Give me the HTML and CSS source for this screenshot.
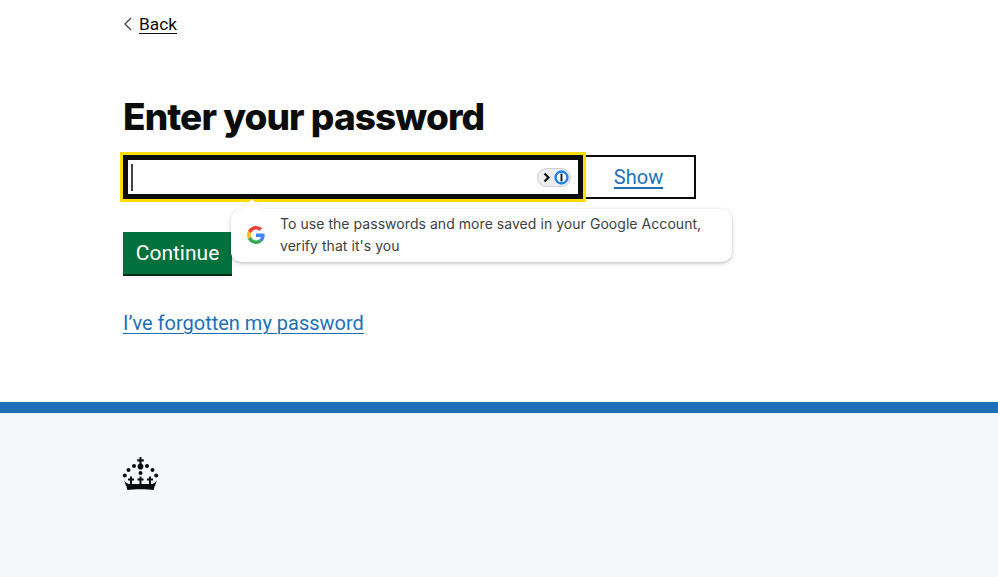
FILE: index.html
```html
<!DOCTYPE html>
<html lang="en">
<head>
<meta charset="utf-8">
<title>Enter your password</title>
<link rel="stylesheet" href="styles.css">
</head>
<body>
<main class="page">
  <a class="back" href="#"><svg class="back-chevron" width="9" height="14" viewBox="0 0 9 14"><path d="M8 1 L2 7 L8 13" fill="none" stroke="#3a3a3a" stroke-width="1.2"/></svg><span class="back-text">Back</span></a>
  <h1 class="title">Enter your password</h1>
  <div class="field">
    <div class="input">
      <span class="caret"></span>
      <span class="pill">
        <svg width="34" height="19" viewBox="0 0 34 19"><rect x=".5" y=".5" width="33" height="18" rx="9" fill="#eceef0" stroke="#cfd1d4"/><path d="M7.5 5.500 L11.500 9.500 L7.500 13.500" fill="none" stroke="#111" stroke-width="2.200"/><circle cx="24.500" cy="9.500" r="7.500" fill="#fff"/><circle cx="24.500" cy="9.500" r="6" fill="#fff" stroke="#1a7ff0" stroke-width="2.400"/><rect x="23.500" y="5.500" width="2" height="8" fill="#15233a"/></svg>
      </span>
    </div>
    <button class="show" type="button">Show</button>
  </div>
  <div class="bubble">
    <span class="bubble-arrow"></span>
    <svg class="g-logo" width="18" height="18" viewBox="0 0 48 48"><path fill="#EA4335" d="M24 9.500c3.500 0 6.700 1.200 9.200 3.600l6.900-6.900C35.900 2.400 30.500 0 24 0 14.600 0 6.500 5.400 2.600 13.200l8 6.200C12.500 13.700 17.800 9.500 24 9.500z"/><path fill="#4285F4" d="M47 24.500c0-1.600-.1-3.100-.4-4.500H24v9h12.900c-.6 3-2.200 5.500-4.700 7.200l7.700 6C44.400 38.100 47 31.900 47 24.500z"/><path fill="#FBBC05" d="M10.600 28.600c-.5-1.400-.8-3-.8-4.600s.3-3.200.8-4.600l-8-6.200C.9 16.500 0 20.100 0 24s.9 7.500 2.600 10.800l8-6.200z"/><path fill="#34A853" d="M24 48c6.500 0 11.900-2.100 15.900-5.800l-7.700-6c-2.200 1.500-4.900 2.300-8.200 2.300-6.200 0-11.500-4.200-13.400-9.900l-8 6.200C6.500 42.600 14.600 48 24 48z"/></svg>
    <p class="bubble-text">To use the passwords and more saved in your Google Account, verify that it's you</p>
  </div>
  <button class="continue" type="button">Continue</button>
  <a class="forgot" href="#">I’ve forgotten my password</a>
</main>
<footer class="footer">
  <svg class="crown" width="37" height="34" viewBox="0 0 37 34">
    <g fill="#0b0c0c">
      <path d="M17.500 0h2v2.300h2.300v2.200h-2.300v2c1.300.7 1.900 1.800 1.900 3 0 1.300-.8 2.400-1.600 3h-2.600c-.8-.6-1.600-1.700-1.600-3 0-1.200.6-2.300 1.900-3v-2h-2.300V2.300h2.300z"/>
      <circle cx="12" cy="9" r="2"/><circle cx="25" cy="9" r="2"/>
      <circle cx="6.500" cy="13" r="2"/><circle cx="30.500" cy="13" r="2"/>
      <circle cx="2.800" cy="18.500" r="2"/><circle cx="34.200" cy="18.500" r="2"/>
      <circle cx="18.500" cy="16" r="2"/>
      <path d="M8 19.500h2v2h2v2h-2v5h-2v-5H6v-2h2z"/>
      <path d="M17.500 19.500h2v2h2v2h-2v5h-2v-5h-2v-2h2z"/>
      <path d="M27 19.500h2v2h2v2h-2v5h-2v-5h-2v-2h2z"/>
      <path d="M2 23 C3 25.500 5 26.500 7 27 H30 C32 26.500 34 25.500 35 23 L33 29 H4 Z"/>
      <path d="M4.300 28.500 H32.700 L31.700 33 C26 32 11 32 5.300 33 Z"/>
    </g>
  </svg>
</footer>
</body>
</html>
```
FILE: styles.css
```css
* { box-sizing: border-box; }
html, body { margin: 0; height: 100%; }
body {
  font-family: "Roboto", "Liberation Sans", sans-serif;
  color: #0b0c0c;
  background: #fff;
  display: flex;
  flex-direction: column;
  min-height: 577px;
}
.page {
  position: relative;
  height: 402px;
  padding: 12px 0 0 123px;
  display: flex;
  flex-direction: column;
  align-items: flex-start;
}
.back {
  display: flex;
  align-items: center;
  gap: 7px;
  height: 24px;
  font-size: 17.300px;
  color: #0b0c0c;
  text-decoration: none;
}
.back-text {
  text-decoration: underline;
  text-underline-offset: 3px;
}
.title {
  margin: 52px 0 0;
  font-family: "Inter", "Liberation Sans", sans-serif;
  font-size: 37px;
  line-height: 58px;
  font-weight: 800;
  letter-spacing: -0.92px;
  color: #0b0c0c;
}
.field {
  display: flex;
  margin-top: 9px;
}
.input {
  position: relative;
  z-index: 1;
  width: 460px;
  height: 44px;
  border: 5px solid #0b0c0c;
  outline: 3px solid #fd0;
  display: flex;
  align-items: center;
  justify-content: space-between;
  padding: 0 7px 0 3px;
  background: #fff;
}
.caret {
  width: 1.500px;
  height: 27px;
  background: #444;
}
.pill { display: flex; }
.show {
  width: 113px;
  height: 44px;
  border: 2px solid #0b0c0c;
  background: #fff;
  padding: 0 2px 0 0;
  font: 400 20px "Roboto", "Liberation Sans", sans-serif;
  color: #1d70b8;
  text-decoration: underline;
  text-underline-offset: 3px;
}
.bubble {
  position: absolute;
  z-index: 2;
  left: 231px;
  top: 209px;
  width: 501px;
  height: 53px;
  display: flex;
  align-items: flex-start;
  gap: 15px;
  padding: 4px 20px 0 16px;
  background: #fff;
  border-radius: 10px;
  box-shadow: 0 1px 3px rgba(0,0,0,.22), 0 2px 6px rgba(0,0,0,.08);
}
.bubble-arrow {
  position: absolute;
  left: 14px;
  top: -7px;
  width: 14px;
  height: 14px;
  background: #fff;
  transform: rotate(45deg);
  box-shadow: -1px -1px 1px rgba(0,0,0,.05);
}
.g-logo { position: relative; margin-top: 13px; flex: none; }
.bubble-text {
  position: relative;
  margin: 0;
  font-family: "Inter", "Liberation Sans", sans-serif;
  font-size: 14px;
  line-height: 22px;
  letter-spacing: .05px;
  color: #3c4043;
}
.continue {
  margin-top: 33px;
  width: 109px;
  height: 44px;
  padding: 0;
  border: 0;
  border-bottom: 2px solid #002d18;
  background: #00703c;
  color: #fff;
  font: 400 21px "Roboto", "Liberation Sans", sans-serif;
}
.forgot {
  margin-top: 33px;
  font-size: 20px;
  line-height: 28px;
  color: #1d70b8;
  text-underline-offset: 3px;
  text-decoration-thickness: 1px;
}
.footer {
  flex: 1;
  border-top: 11px solid #1d70b8;
  background: #f4f8fb;
  padding: 44px 0 0 122px;
}
.crown { display: block; }
```
